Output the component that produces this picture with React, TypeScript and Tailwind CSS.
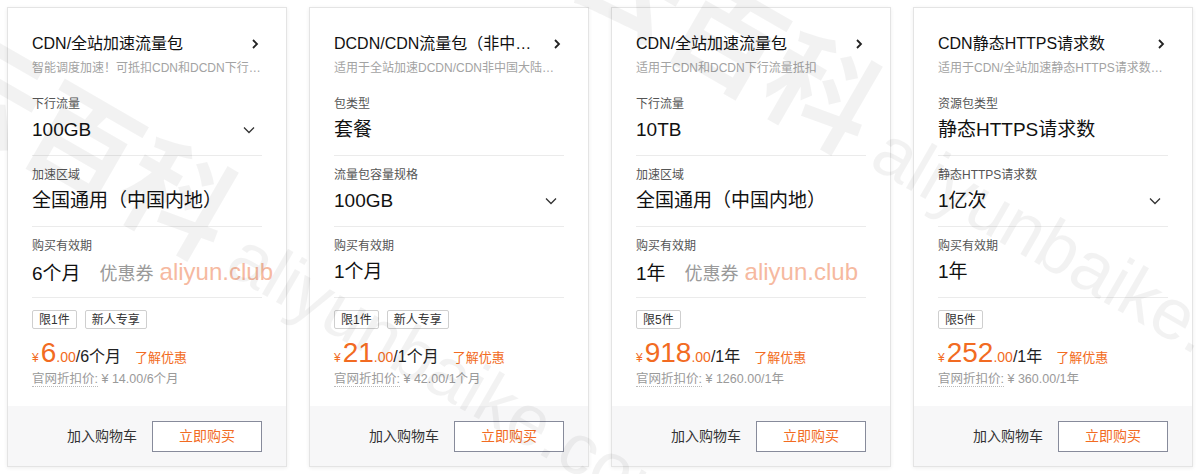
type Field = {
  label: string;
  value: string;
  dropdown?: boolean;
  coupon?: boolean;
};

type Plan = {
  title: string;
  desc: string;
  fields: Field[];
  tags: string[];
  price: string;
  unit: string;
  original: string;
};

const plans: Plan[] = [
  {
    title: "CDN/全站加速流量包",
    desc: "智能调度加速！可抵扣CDN和DCDN下行流量",
    fields: [
      { label: "下行流量", value: "100GB", dropdown: true },
      { label: "加速区域", value: "全国通用（中国内地）" },
      { label: "购买有效期", value: "6个月", coupon: true },
    ],
    tags: ["限1件", "新人专享"],
    price: "6",
    unit: "/6个月",
    original: "¥ 14.00/6个月",
  },
  {
    title: "DCDN/CDN流量包（非中国内地）",
    desc: "适用于全站加速DCDN/CDN非中国大陆地区流量抵扣",
    fields: [
      { label: "包类型", value: "套餐" },
      { label: "流量包容量规格", value: "100GB", dropdown: true },
      { label: "购买有效期", value: "1个月" },
    ],
    tags: ["限1件", "新人专享"],
    price: "21",
    unit: "/1个月",
    original: "¥ 42.00/1个月",
  },
  {
    title: "CDN/全站加速流量包",
    desc: "适用于CDN和DCDN下行流量抵扣",
    fields: [
      { label: "下行流量", value: "10TB" },
      { label: "加速区域", value: "全国通用（中国内地）" },
      { label: "购买有效期", value: "1年", coupon: true },
    ],
    tags: ["限5件"],
    price: "918",
    unit: "/1年",
    original: "¥ 1260.00/1年",
  },
  {
    title: "CDN静态HTTPS请求数",
    desc: "适用于CDN/全站加速静态HTTPS请求数抵扣",
    fields: [
      { label: "资源包类型", value: "静态HTTPS请求数" },
      { label: "静态HTTPS请求数", value: "1亿次", dropdown: true },
      { label: "购买有效期", value: "1年" },
    ],
    tags: ["限5件"],
    price: "252",
    unit: "/1年",
    original: "¥ 360.00/1年",
  },
];

function ChevronRight() {
  return (
    <svg width="8" height="10" viewBox="0 0 8 10" className="shrink-0 mr-[3px]">
      <polyline points="2,1 6,5 2,9" fill="none" stroke="#222" strokeWidth="1.8" />
    </svg>
  );
}

function ChevronDown() {
  return (
    <svg width="12" height="8" viewBox="0 0 12 8" className="shrink-0 mr-[7px]">
      <polyline points="1,1.5 6,6.5 11,1.5" fill="none" stroke="#333" strokeWidth="1.3" />
    </svg>
  );
}

function PlanCard({ plan }: { plan: Plan }) {
  return (
    <div className="w-[280px] h-[460px] shrink-0 flex flex-col bg-white border border-[#e4e4e4] shadow-[0_1px_4px_rgba(0,0,0,0.07)]">
      <div className="flex-1 px-[24px] pt-[25px]">
        <div className="flex items-center justify-between gap-[14px] h-[22px]">
          <span className="truncate text-[16px] text-[#111]">{plan.title}</span>
          <ChevronRight />
        </div>
        <div className="mt-[4px] h-[18px] leading-[18px] truncate text-[12px] text-[#a3a3a3]">
          {plan.desc}
        </div>
        <div className="mt-[8px]">
          {plan.fields.map((f) => (
            <div key={f.label} className="pt-[10px] pb-[11px] border-b border-[#ebebeb]">
              <div className="h-[18px] leading-[18px] text-[12px] text-[#555]">{f.label}</div>
              <div className="mt-[3px] h-[28px] flex items-center justify-between">
                <div className="flex items-baseline whitespace-nowrap">
                  <span className="text-[19px] text-[#111] leading-[28px]">{f.value}</span>
                  {f.coupon && (
                    <>
                      <span className="ml-[19px] text-[18px] text-[#9a9a9a]">优惠券</span>
                      <span className="ml-[6px] text-[24px] text-[#f6b9a0]">aliyun.club</span>
                    </>
                  )}
                </div>
                {f.dropdown && <ChevronDown />}
              </div>
            </div>
          ))}
        </div>
        <div className="mt-[12px] flex gap-[8px]">
          {plan.tags.map((t) => (
            <span
              key={t}
              className="h-[19px] px-[6px] flex items-center rounded-[2px] border border-[#cfcfcf] text-[12px] text-[#333]"
            >
              {t}
            </span>
          ))}
        </div>
        <div className="mt-[9px] flex items-baseline text-[#f26b22] whitespace-nowrap">
          <span className="text-[12px] mr-[2px]">¥</span>
          <span className="text-[28px] leading-[30px]">{plan.price}</span>
          <span className="text-[14px]">.00</span>
          <span className="text-[16px] text-[#222]">{plan.unit}</span>
          <span className="ml-[14px] text-[13px]">了解优惠</span>
        </div>
        <div className="mt-[1px] text-[12.5px] leading-[18px] text-[#9a9a9a] whitespace-nowrap">
          <span className="border-b border-dotted border-[#bbb]">官网折扣价:</span> {plan.original}
        </div>
      </div>
      <div className="h-[60px] flex items-center justify-end gap-[15px] pr-[24px] bg-[#f7f7f8]">
        <span className="text-[14px] text-[#333]">加入购物车</span>
        <button className="w-[110px] h-[31px] border border-[#878b9b] bg-white text-[14px] text-[#f26b22]">
          立即购买
        </button>
      </div>
    </div>
  );
}

export default function App() {
  return (
    <div
      className="relative w-[1200px] h-[474px] overflow-hidden bg-white"
      style={{ fontFamily: '"Liberation Sans", "Noto Sans CJK SC", sans-serif' }}
    >
      <div className="flex gap-[22px] pl-[7px] pt-[7px]">
        {plans.map((p, i) => (
          <PlanCard key={i} plan={p} />
        ))}
      </div>

      {/* watermark */}
      <div className="pointer-events-none absolute inset-0 overflow-hidden text-black/[0.05] whitespace-nowrap">
        <div className="absolute left-[-224px] top-[-94px] origin-top-left rotate-[30deg] flex items-baseline">
          <span className="text-[110px] font-bold leading-none">阿里云百科</span>
          <span className="ml-[20px] text-[72px] leading-none">aliyunbaike.com</span>
        </div>
        <div className="absolute left-[420px] top-[-200px] origin-top-left rotate-[30deg] flex items-baseline">
          <span className="text-[110px] font-bold leading-none">阿里云百科</span>
          <span className="ml-[20px] text-[72px] leading-none">aliyunbaike.com</span>
        </div>
      </div>
    </div>
  );
}
